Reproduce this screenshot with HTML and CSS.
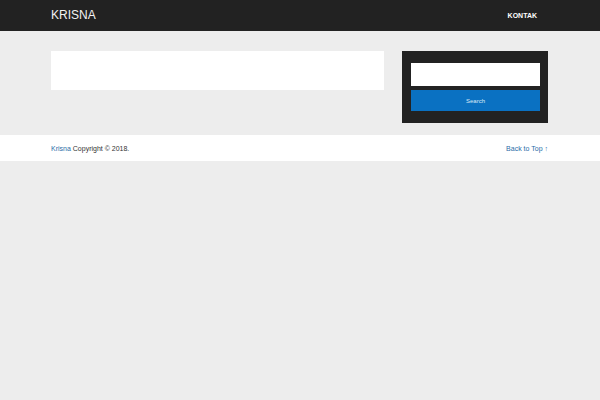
FILE: index.html
```html
<!DOCTYPE html>
<html>
<head>
<meta charset="utf-8">
<link rel="stylesheet" href="styles.css">
</head>
<body>
<header class="site-header">
  <div class="container header-inner">
    <div class="site-title">KRISNA</div>
    <nav class="nav"><a href="#">KONTAK</a></nav>
  </div>
</header>
<div class="container content">
  <main class="main-box"></main>
  <aside class="sidebar">
    <div class="search-input"></div>
    <button class="search-btn">Search</button>
  </aside>
</div>
<footer class="site-footer">
  <div class="container footer-inner">
    <div class="copy"><a href="#">Krisna</a> Copyright © 2018.</div>
    <a class="top-link" href="#">Back to Top ↑</a>
  </div>
</footer>
</body>
</html>
```
FILE: styles.css
```css
html, body {
  margin: 0;
  padding: 0;
  background: #ededed;
  font-family: "Liberation Sans", Arial, sans-serif;
}
a { text-decoration: none; }
.container {
  width: 498px;
  margin: 0 auto;
  box-sizing: border-box;
  padding-right: 1px;
}
.site-header {
  background: #222222;
  height: 31px;
}
.header-inner {
  height: 31px;
  display: flex;
  align-items: center;
  justify-content: space-between;
}
.site-title {
  color: #f2f2f2;
  font-size: 12px;
  margin-top: -1px;
}
.nav a {
  color: #ffffff;
  font-size: 7px;
  font-weight: bold;
  margin-right: 11px;
  margin-top: -1px;
  display: block;
}
.content {
  display: flex;
  align-items: flex-start;
  gap: 18px;
  padding-top: 20px;
  padding-bottom: 12px;
}
.main-box {
  width: 333px;
  height: 39px;
  background: #ffffff;
}
.sidebar {
  width: 146px;
  background: #222222;
  padding: 12px 8px 12px 9px;
  box-sizing: border-box;
  display: flex;
  flex-direction: column;
  gap: 4px;
}
.search-input {
  height: 23px;
  background: #ffffff;
}
.search-btn {
  height: 21px;
  border: none;
  background: #0a71c2;
  color: #dbe9f6;
  font-family: "Liberation Sans", Arial, sans-serif;
  font-size: 6px;
  padding: 0;
}
.site-footer {
  background: #ffffff;
  height: 26px;
}
.footer-inner {
  height: 26px;
  display: flex;
  align-items: center;
  justify-content: space-between;
  font-size: 7px;
  color: #333333;
}
.copy a { color: #2a6ca8; }
.top-link { color: #2a6ca8; }
```
